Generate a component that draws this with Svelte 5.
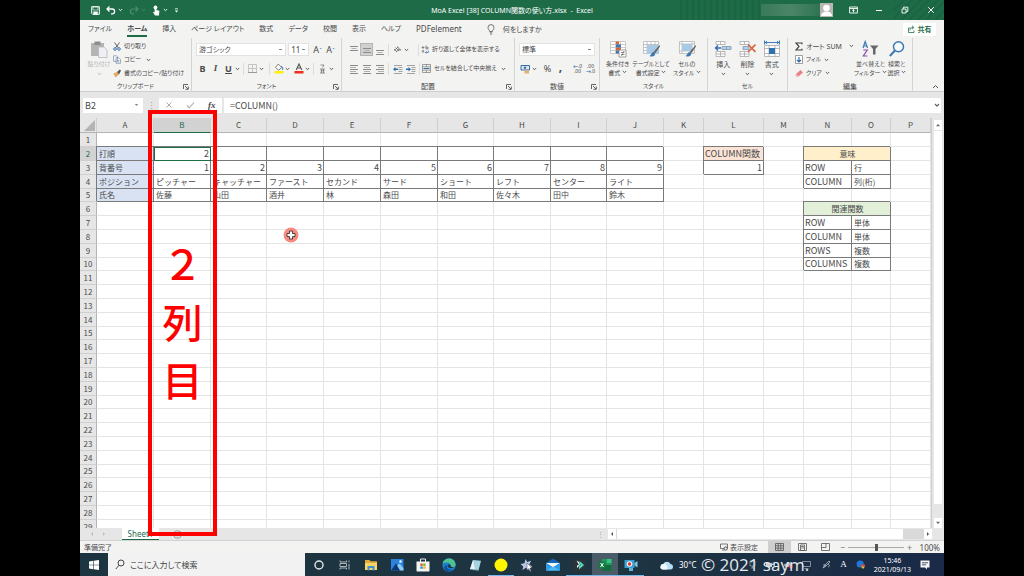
<script>
  const tabs = ['ファイル', 'ホーム', '挿入', 'ページ レイアウト', '数式', 'データ', '校閲', '表示', 'ヘルプ', 'PDFelement'];

  const cols = [
    ['A', 57], ['B', 57], ['C', 56], ['D', 57], ['E', 57], ['F', 57], ['G', 56], ['H', 57],
    ['I', 56], ['J', 57], ['K', 40], ['L', 60], ['M', 40], ['N', 48], ['O', 39], ['P', 40]
  ];

  // sheet content, one list per row starting at column A
  const cells = {
    2: ['打順', '2', '', '', '', '', '', '', '', ''],
    3: ['背番号', '1', '2', '3', '4', '5', '6', '7', '8', '9'],
    4: ['ポジション', 'ピッチャー', 'キャッチャー', 'ファースト', 'セカンド', 'サード', 'ショート', 'レフト', 'センター', 'ライト'],
    5: ['氏名', '佐藤', '山田', '酒井', '林', '森田', '和田', '佐々木', '田中', '鈴木']
  };

  const side = {
    L2: { text: 'COLUMN関数', cls: 'orange' },
    L3: { text: '1', cls: '' },
    N2: { text: '意味', cls: 'yellow', span: 2 },
    N3: { text: 'ROW' },
    O3: { text: '行' },
    N4: { text: 'COLUMN' },
    O4: { text: '列(桁)' },
    N6: { text: '関連関数', cls: 'green', span: 2 },
    N7: { text: 'ROW' },
    O7: { text: '単体' },
    N8: { text: 'COLUMN' },
    O8: { text: '単体' },
    N9: { text: 'ROWS' },
    O9: { text: '複数' },
    N10: { text: 'COLUMNS' },
    O10: { text: '複数' }
  };

  function getCell(row, i) {
    const name = cols[i][0];
    if (cells[row] && i < 10) {
      return { text: cells[row][i], cls: i === 0 ? 'blue' : '', boxed: true };
    }
    const s = side[name + row];
    if (s) return { ...s, boxed: true };
    return { text: '', cls: '' };
  }

  function isHidden(row, i) {
    return cols[i][0] === 'O' && (row === 2 || row === 6);
  }

  const rows = Array.from({ length: 29 }, (_, i) => i + 1);

  let formula = '=COLUMN()';
  let nameBox = 'B2';
  let zoom = 50;
  let search = '';
</script>

{#snippet chev()}
  <svg class="chev" width="5" height="4" viewBox="0 0 5 4"><path d="M.8 1l1.7 1.7L4.2 1" fill="none" stroke="currentColor" stroke-width=".9" /></svg>
{/snippet}

{#snippet launcher()}
  <button class="launcher" aria-label="詳細">
    <svg width="6" height="6" viewBox="0 0 6 6"><path d="M.5 5V.5H5M2 2l3 3M5.3 2.5v2.8H2.5" fill="none" stroke="#555" stroke-width=".9" /></svg>
  </button>
{/snippet}

{#snippet lines(a, b)}
  <svg width="10" height="10" viewBox="0 0 10 10"><path d={a} stroke="#8a8a8a" fill="none" /><path d={b} stroke="#b0b0b0" fill="none" /></svg>
{/snippet}

<div class="screen">
  <div class="window">
    <header class="titlebar">
      <div class="quick">
        <button aria-label="上書き保存"><svg width="9" height="9" viewBox="0 0 9 9"><path d="M.7.7h7.6v7.6H1.7l-1-1z" fill="none" stroke="#fff" /><path d="M2 1h5v3H2z" fill="none" stroke="#fff" stroke-width=".6" /><path d="M2.3 5.5h4.4v3H2.3z" fill="#fff" /></svg></button>
        <button aria-label="元に戻す"><svg width="10" height="9" viewBox="0 0 10 9"><path d="M3.5.5L1 3l2.500 2.500M1 3h5.200a2.400 2.400 0 010 4.800H5" fill="none" stroke="#fff" stroke-width="1.300" /></svg>{@render chev()}</button>
        <button class="dim" aria-label="やり直し"><svg width="10" height="9" viewBox="0 0 10 9"><path d="M6.500.5L9 3 6.500 5.500M9 3H3.800a2.400 2.400 0 000 4.800H5" fill="none" stroke="currentColor" stroke-width="1.200" /></svg>{@render chev()}</button>
        <button aria-label="タッチ"><svg width="9" height="11" viewBox="0 0 9 11"><circle cx="3.500" cy="2.400" r="1.900" fill="#fff" /><path d="M2.600 2h1.800v3l3 .8-.4 4.700H3L.8 7l1.800.3z" fill="#fff" /></svg>{@render chev()}</button>
        <button aria-label="カスタマイズ"><svg width="5" height="5" viewBox="0 0 5 5"><path d="M1 .8h3" stroke="#fff" stroke-width=".8" /><path d="M.8 2.500h3.400L2.500 4.500z" fill="#fff" /></svg></button>
      </div>
      <div class="title">MoA Excel [38] COLUMN関数の使い方.xlsx&nbsp; -&nbsp; Excel</div>
      <div class="account">
        <span class="username"></span>
        <svg class="avatar" width="13" height="14" viewBox="0 0 13 14"><rect width="13" height="14" fill="#b9b5b4" /><circle cx="6.500" cy="5" r="3.300" fill="#fff" /><path d="M1 13c0-3 2-4.500 5.500-4.500S12 10 12 13z" fill="#fff" /></svg>
        <button aria-label="リボンの表示オプション"><svg width="9" height="8" viewBox="0 0 9 8"><path d="M.6 1h7.800v6H.6zM.6 2.500h7.800M4.500 6.300V3.500M3.200 4.700l1.300-1.300 1.300 1.300" fill="none" stroke="#fff" stroke-width=".9" /></svg></button>
        <button aria-label="最小化"><svg width="8" height="8" viewBox="0 0 8 8"><path d="M1 4.500h6" stroke="#fff" /></svg></button>
        <button aria-label="元のサイズに戻す"><svg width="8" height="8" viewBox="0 0 8 8"><path d="M1 3h4v4H1zM2.500 2.800V1.200h4.300v4.300H5.200" fill="none" stroke="#fff" stroke-width=".9" /></svg></button>
        <button aria-label="閉じる"><svg width="8" height="8" viewBox="0 0 8 8"><path d="M1.200 1.200l5.600 5.600M6.800 1.200L1.200 6.800" stroke="#fff" /></svg></button>
      </div>
    </header>

    <nav class="tabs">
      {#each tabs as tab}
        <button class="tab" class:active={tab === 'ホーム'} class:roman={tab === 'PDFelement'}>{tab}</button>
      {/each}
      <button class="tell">
        <svg width="8" height="11" viewBox="0 0 8 11"><path d="M2.600 7.500C2.600 6 1 5.500 1 3.600a3 3 0 016 0C7 5.500 5.400 6 5.400 7.500zM2.800 8.800h2.400M3.200 10.200h1.600" fill="none" stroke="#555" stroke-width=".8" /></svg>
        何をしますか
      </button>
      <button class="share">
        <svg width="7" height="8" viewBox="0 0 7 8"><path d="M2.500 3H.5v4.500h5.500V5.500M2 5.500C2 3.500 3.500 2.500 5 2.500M4 .8l2 1.700-2 1.700" fill="none" stroke="#1e6b48" stroke-width=".8" /></svg>
        共有
      </button>
    </nav>

    <div class="ribbon">
      <section class="group">
        <div class="body clip">
          <button class="big faded">
            <svg width="18" height="18" viewBox="0 0 18 18"><path d="M1 3h13v13H1z" fill="#b4b4b4" /><path d="M4.500 1.500h6V5h-6z" fill="#8d8d8d" /><path d="M8.500 7h5.500l3 3v7.500H8.500z" fill="#f0f0f4" stroke="#b0b0b8" stroke-width=".7" /></svg>
            <span>貼り付け</span>{@render chev()}
          </button>
          <div class="stack">
            <button><svg width="8" height="9" viewBox="0 0 8 9"><path d="M1.500.5l4 5.500M6.500.5l-4 5.500" stroke="#555" stroke-width=".9" /><circle cx="2" cy="7" r="1.300" fill="none" stroke="#3c78b4" /><circle cx="6" cy="7" r="1.300" fill="none" stroke="#3c78b4" /></svg>切り取り</button>
            <button><svg width="8" height="9" viewBox="0 0 8 9"><path d="M.5.8h3l1 1v4.500h-4zM3 2.800h3l1.500 1.500v4H3z" fill="#f6f8fb" stroke="#7c8ea0" stroke-width=".7" /><path d="M4 5.500h2.500M4 7h2.500" stroke="#6c94c0" stroke-width=".6" /></svg>コピー&nbsp; {@render chev()}</button>
            <button><svg width="8" height="9" viewBox="0 0 8 9"><path d="M.3 4.500L4 3l2 2.500-3.500 3z" fill="#e8a860" /><path d="M4 3l2 2.500L8 1.500 6.800.5z" fill="#555" /></svg>書式のコピー/貼り付け</button>
          </div>
        </div>
        <div class="caption kana">クリップボード{@render launcher()}</div>
      </section>

      <section class="group">
        <div class="body rows">
          <div class="line">
            <select class="font" aria-label="フォント"><option>游ゴシック</option></select>
            <select class="size" aria-label="フォント サイズ"><option>11</option></select>
            <button class="tool grow" aria-label="フォント サイズの拡大">A<sup>ˆ</sup></button>
            <button class="tool" aria-label="フォント サイズの縮小">A<sup>ˇ</sup></button>
          </div>
          <div class="line">
            <button class="tool bold">B</button>
            <button class="tool italic">I</button>
            <button class="tool under">U</button>{@render chev()}
            <i class="sep"></i>
            <button class="tool" aria-label="罫線"><svg width="9" height="9" viewBox="0 0 9 9"><path d="M.5.5h8v8h-8zM4.500.5v8M.5 4.500h8" fill="none" stroke="#c4c4c4" /><path d="M0 8.500h9" stroke="#999" /></svg></button>{@render chev()}
            <i class="sep wider"></i>
            <button class="tool" aria-label="塗りつぶしの色"><svg width="10" height="11" viewBox="0 0 10 11"><path d="M4.300 1l3.500 3.500L4.500 7.300 1.500 4.300z" fill="#f8f8f8" stroke="#666" stroke-width=".8" /><path d="M7 3.500c2 0 2 2 1.600 3.500" fill="none" stroke="#3c78b4" /><path d="M.5 8h9v2.500h-9z" fill="#fcf304" /></svg></button>{@render chev()}
            <button class="tool grow" aria-label="フォントの色"><svg width="10" height="11" viewBox="0 0 10 11"><path d="M2.200 7L5 1l2.800 6M3.200 5h3.600" fill="none" stroke="#555" stroke-width="1.100" /><path d="M.5 8h9v2.500h-9z" fill="#f02a1d" /></svg></button>{@render chev()}
            <i class="sep"></i>
            <button class="tool" aria-label="ふりがな"><svg width="7" height="10" viewBox="0 0 7 10"><path d="M1.500 1h3.500L3.500 3.500M1 5h5M1.500 6.800h4M1 9h5M2.500 5v4M4.500 5v4" fill="none" stroke="#777" stroke-width=".8" /></svg></button>{@render chev()}
          </div>
        </div>
        <div class="caption kana">フォント{@render launcher()}</div>
      </section>

      <section class="group">
        <div class="body rows align">
          <div class="line">
            <button class="tool" aria-label="上揃え">{@render lines('M1 1.500h8M1 5.500h8', 'M2.500 3.500h5')}</button>
            <button class="tool on" aria-label="上下中央揃え">{@render lines('M1 3.500h8M1 7.500h8', 'M2.500 5.500h5')}</button>
            <button class="tool" aria-label="下揃え">{@render lines('M1 5.500h8M1 9.500h8', 'M2.500 7.500h5')}</button>
            <i class="sep close"></i>
            <button class="tool" aria-label="方向"><svg width="9" height="9" viewBox="0 0 9 9"><path d="M1 4l3 3M2.500 2.500l3.500 3.500M1.500 5.500L5 2M3 7l3.500-3M4.500 1.500L7 5.500 8 4" fill="none" stroke="#666" stroke-width=".8" /></svg></button>{@render chev()}
            <i class="sep far"></i>
            <button class="wide"><svg width="8" height="9" viewBox="0 0 8 9"><path d="M.5 2.500h3M2 1v3M5 .5v3.500M5 2.200h2v1.800H5M.8 6h2.500M2 5v3" fill="none" stroke="#666" stroke-width=".7" /><path d="M7.300 5.500v2H4.500M5.500 6.300L4.300 7.500l1.200 1.200" fill="none" stroke="#3c78b4" stroke-width=".8" /></svg>折り返して全体を表示する</button>
          </div>
          <div class="line">
            <button class="tool" aria-label="左揃え">{@render lines('M1 1.500h8M1 5.500h8M1 9.500h8', 'M1 3.500h6M1 7.500h6')}</button>
            <button class="tool" aria-label="中央揃え">{@render lines('M1 1.500h8M1 5.500h8M1 9.500h8', 'M2 3.500h6M2 7.500h6')}</button>
            <button class="tool" aria-label="右揃え">{@render lines('M1 1.500h8M1 5.500h8M1 9.500h8', 'M3 3.500h6M3 7.500h6')}</button>
            <i class="sep close"></i>
            <button class="tool" aria-label="インデントを減らす"><svg width="10" height="10" viewBox="0 0 10 10"><path d="M1 1.500h8M5.500 3.500h4M5.500 5.500h4M5.500 7.500h4M1 9.500h8" stroke="#999" stroke-width=".9" /><path d="M0 5.200L2.500 3v1.500H5v1.500H2.500v1.500z" fill="#2e6fae" /></svg></button>
            <button class="tool" aria-label="インデントを増やす"><svg width="10" height="10" viewBox="0 0 10 10"><path d="M1 1.500h8M5.500 3.500h4M5.500 5.500h4M5.500 7.500h4M1 9.500h8" stroke="#999" stroke-width=".9" /><path d="M5 5.200L2.500 3v1.500H0v1.500h2.500v1.500z" fill="#2e6fae" /></svg></button>
            <i class="sep close"></i>
            <button class="wide"><svg width="9" height="9" viewBox="0 0 9 9"><path d="M.5.5h8v8h-8zM.5 2.800h8M.5 6.200h8M4.500.5v2.300M4.500 6.200v2.300" fill="none" stroke="#777" stroke-width=".7" /><path d="M1.500 4.500h6" stroke="#2e6fae" /></svg>セルを結合して中央揃え&nbsp; {@render chev()}</button>
          </div>
        </div>
        <div class="caption">配置{@render launcher()}</div>
      </section>

      <section class="group">
        <div class="body rows">
          <div class="line">
            <select class="format" aria-label="表示形式"><option>標準</option></select>
          </div>
          <div class="line">
            <button class="tool" aria-label="通貨"><svg width="11" height="10" viewBox="0 0 11 10"><path d="M1 1.500h8.500v4.500H1z" fill="#dce8f4" stroke="#3c6ea4" /><circle cx="5" cy="3.700" r="1.200" fill="#3c6ea4" /><path d="M4.500 6.500h4.500v3H4.500z" fill="#e8b070" /></svg></button>{@render chev()}
            <button class="tool pct">%</button>
            <button class="tool comma">,</button>
            <i class="sep close"></i>
            <button class="tool dec" aria-label="小数点以下の表示桁数を増やす"><span><b>←</b>.0</span><span>.00</span></button>
            <button class="tool dec" aria-label="小数点以下の表示桁数を減らす"><span>.00</span><span><b>→</b>.0</span></button>
          </div>
        </div>
        <div class="caption">数値{@render launcher()}</div>
      </section>

      <section class="group">
        <div class="body bigs styles">
          <button class="big">
            <svg width="18" height="18" viewBox="0 0 18 18"><path d="M1.500 1.500h15v12h-15zM1.500 4.500h15M1.500 7.500h15M1.500 10.500h15M6.500 1.500v12M11.500 1.500v12" fill="#fff" stroke="#bdbdbd" stroke-width=".8" /><path d="M7 1.500h3v3H7zM7 7.500h5v3H7z" fill="#d9623b" /><path d="M7 4.500h5v3H7zM7 10.500h3v3H7z" fill="#3c78b4" /><path d="M10 10h7v7h-7z" fill="#fff" stroke="#888" stroke-width=".8" /><path d="M12 12.500h3.500M12 14.500h3.500M15 11l-2.500 5" stroke="#666" stroke-width=".7" /></svg>
            <span>条件付き</span><span>書式 {@render chev()}</span>
          </button>
          <button class="big">
            <svg width="18" height="18" viewBox="0 0 18 18"><path d="M1.500 1.500h15v12h-15zM1.500 4.500h15M5 1.500v12M9 1.500v12M13 1.500v12M1.500 7.500h15M1.500 10.500h15" fill="#fff" stroke="#b5b5b5" stroke-width=".8" /><path d="M5 5h11.500v9H5z" fill="#a9cae6" /><path d="M17.500 5l-6 7 1.500 1.500 5-7z" fill="#666" /><path d="M11.500 12c-2 0-2 3-4 4 3 1.500 6 0 5.500-2.500z" fill="#3c78b4" /></svg>
            <span>テーブルとして</span><span>書式設定 {@render chev()}</span>
          </button>
          <button class="big">
            <svg width="18" height="18" viewBox="0 0 18 18"><path d="M1.500 1.500h15v12h-15zM1.500 4h15M1.500 11h15M4 1.500v12M14 1.500v12" fill="#fff" stroke="#b5b5b5" stroke-width=".8" /><path d="M4 4h10v7H4z" fill="#a9cae6" /><path d="M17.500 5l-6 7 1.500 1.500 5-7z" fill="#666" /><path d="M11.500 12c-2 0-2 3-4 4 3 1.500 6 0 5.500-2.500z" fill="#3c78b4" /></svg>
            <span>セルの</span><span>スタイル {@render chev()}</span>
          </button>
        </div>
        <div class="caption kana">スタイル</div>
      </section>

      <section class="group">
        <div class="body bigs cellops">
          <button class="big">
            <svg width="18" height="18" viewBox="0 0 18 18"><path d="M2 1.500h9v3H2zM6.500 1.500v3M2 11.500h9v5H2zM6.500 11.500v5M2 14h9" fill="#fff" stroke="#a8a8a8" stroke-width=".8" /><path d="M8 6.500h9v3H8zM12.500 6.500v3" fill="#b4d0ea" stroke="#7f97ad" stroke-width=".8" /><path d="M7 8H1.500M4 5.500L1.500 8 4 10.500" fill="none" stroke="#2e6fae" stroke-width="1.300" /></svg>
            <span>挿入</span>{@render chev()}
          </button>
          <button class="big">
            <svg width="18" height="18" viewBox="0 0 18 18"><path d="M2 1.500h9v3H2zM6.500 1.500v3M2 11.500h9v5H2zM6.500 11.500v5M2 14h9" fill="#fff" stroke="#a8a8a8" stroke-width=".8" /><path d="M5 6.500h6v3H5z" fill="#b4d0ea" stroke="#7f97ad" stroke-width=".8" /><path d="M10 4.500l7.500 7.500M17.500 4.500L10 12" stroke="#d9623b" stroke-width="1.700" /></svg>
            <span>削除</span>{@render chev()}
          </button>
          <button class="big">
            <svg width="18" height="18" viewBox="0 0 18 18"><path d="M1.500 5.500h15v11h-15zM1.500 8.500h15M1.500 13.500h15M6 5.500v11M12 5.500v11" fill="#fff" stroke="#a8a8a8" stroke-width=".8" /><path d="M6 8h6v6H6z" fill="#2e6fae" /><path d="M2 2.500h14M4 1L2.300 2.500 4 4M14 1l1.700 1.500L14 4M1.500.5v4M16.500.5v4" fill="none" stroke="#2e6fae" stroke-width=".9" /></svg>
            <span>書式</span>{@render chev()}
          </button>
        </div>
        <div class="caption kana">セル</div>
      </section>

      <section class="group">
        <div class="body edit">
          <div class="stack">
            <button class="sum"><svg width="8" height="9" viewBox="0 0 8 9"><path d="M7 2.200V1H1l3 3.500L1 8h6V6.800" fill="none" stroke="#444" stroke-width="1.200" /></svg>オート SUM &nbsp;{@render chev()}</button>
            <button><svg width="8" height="9" viewBox="0 0 8 9"><path d="M.5.5h7v8h-7z" fill="#fff" stroke="#888" stroke-width=".8" /><path d="M4 2v5M2 5l2 2 2-2" fill="none" stroke="#2e6fae" stroke-width="1.200" /></svg>フィル {@render chev()}</button>
            <button><svg width="8" height="9" viewBox="0 0 8 9"><path d="M5.500 1L8 3.500l-4.500 4L1 5z" fill="#e8808a" /><path d="M1 5l2.500 2.500-1.500.8L.2 6.300z" fill="#f3b2b8" /></svg>クリア {@render chev()}</button>
          </div>
          <button class="big">
            <svg width="18" height="18" viewBox="0 0 18 18"><path d="M2 8l2.200-6.500L6.500 8M2.800 6h3" fill="none" stroke="#3c78b4" stroke-width="1.200" /><path d="M2.300 10h4L2.300 16h4.200" fill="none" stroke="#8b4fa8" stroke-width="1.200" /><path d="M9 5.500h8.500l-3 3.500v5.500h-2.500V9z" fill="#666" /></svg>
            <span>並べ替えと</span><span>フィルター {@render chev()}</span>
          </button>
          <button class="big">
            <svg width="18" height="18" viewBox="0 0 18 18"><circle cx="10.500" cy="6.800" r="5" fill="#f5fafd" stroke="#3c78b4" stroke-width="1.500" /><path d="M7 10.500L1.800 16" stroke="#3c78b4" stroke-width="2" /></svg>
            <span>検索と</span><span>選択 {@render chev()}</span>
          </button>
        </div>
        <div class="caption">編集</div>
      </section>
      <button class="collapse" aria-label="リボンを折りたたむ"><svg width="7" height="5" viewBox="0 0 7 5"><path d="M1 4l2.500-2.500L6 4" fill="none" stroke="#555" /></svg></button>
    </div>

    <div class="formulabar">
      <div class="namebox">
        <input aria-label="名前ボックス" bind:value={nameBox} />
        <svg width="5" height="4" viewBox="0 0 5 4"><path d="M.8 1h3.400L2.500 3z" fill="#888" /></svg>
      </div>
      <span class="grip">⋮</span>
      <div class="fx">
        <button aria-label="キャンセル"><svg width="8" height="8" viewBox="0 0 8 8"><path d="M1.500 1.500l5 5M6.500 1.500l-5 5" stroke="#aaa" /></svg></button>
        <button aria-label="入力"><svg width="9" height="8" viewBox="0 0 9 8"><path d="M1 4.500l2.300 2.300L8 1.500" fill="none" stroke="#aaa" stroke-width="1.100" /></svg></button>
        <button class="fn">fx</button>
      </div>
      <div class="formula">
        <input aria-label="数式バー" bind:value={formula} />
        <svg width="6" height="5" viewBox="0 0 6 5"><path d="M1 1l2 2.200L5 1" fill="none" stroke="#666" stroke-width="1.200" /></svg>
      </div>
    </div>

    <main class="sheet">
      <div class="grid">
        <table>
          <colgroup>
            <col style="width: 17px" />
            {#each cols as [name, width]}
              <col style="width: {width}px" />
            {/each}
            <col />
          </colgroup>
          <thead>
            <tr>
              <th class="corner" aria-label="すべて選択"><svg width="11" height="11" viewBox="0 0 11 11"><path d="M11 0v11H0z" fill="#b4b4b4" /></svg></th>
              {#each cols as [name]}
                <th class:selected={name === 'B'}>{name}</th>
              {/each}
              <th></th>
            </tr>
          </thead>
          <tbody>
            {#each rows as row}
              <tr>
                <th class:selected={row === 2}>{row}</th>
                {#each cols as [name], i}
                  {#if !isHidden(row, i)}
                    {@const cell = getCell(row, i)}
                    <td
                      colspan={cell.span || 1}
                      class={cell.cls}
                      class:boxed={cell.boxed}
                      class:soft={row === 2 && i < 10}
                      class:number={/^\d+$/.test(cell.text)}
                      class:latin={/^[A-Z]/.test(cell.text)}
                      class:current={row === 2 && name === 'B'}>{cell.text}</td>
                  {/if}
                {/each}
                <td></td>
              </tr>
            {/each}
          </tbody>
        </table>
      </div>
      <div class="vscroll">
        <button aria-label="上へ"><svg width="6" height="4" viewBox="0 0 6 4"><path d="M1 3.200h4L3 1z" fill="#666" /></svg></button>
        <span class="thumb"></span>
        <button aria-label="下へ"><svg width="6" height="4" viewBox="0 0 6 4"><path d="M1 .8h4L3 3z" fill="#666" /></svg></button>
      </div>
    </main>

    <div class="sheettabs">
      <span class="arrows">
        <svg width="4" height="6" viewBox="0 0 4 6"><path d="M3 1v4L1 3z" fill="#bbb" /></svg>
        <svg width="4" height="6" viewBox="0 0 4 6"><path d="M1 1v4l2-2z" fill="#bbb" /></svg>
      </span>
      <button class="sheettab">Sheet1</button>
      <button class="add" aria-label="新しいシート"><svg width="9" height="9" viewBox="0 0 9 9"><circle cx="4.500" cy="4.500" r="3.800" fill="none" stroke="#888" stroke-width=".8" /><path d="M2.500 4.500h4M4.500 2.500v4" stroke="#888" stroke-width=".8" /></svg></button>
      <span class="grip">⋮</span>
      <div class="hscroll">
        <button aria-label="左へ"><svg width="4" height="6" viewBox="0 0 4 6"><path d="M3 1v4L1 3z" fill="#555" /></svg></button>
        <span class="thumb"></span>
        <button aria-label="右へ"><svg width="4" height="6" viewBox="0 0 4 6"><path d="M1 1v4l2-2z" fill="#555" /></svg></button>
      </div>
    </div>

    <footer class="status">
      <span class="ready">準備完了</span>
      <button class="display"><svg width="8" height="8" viewBox="0 0 8 8"><path d="M.5 1h7v4.500h-7zM2 7h2.500" fill="none" stroke="#555" stroke-width=".8" /><circle cx="5.700" cy="5.500" r="1.600" fill="#f3f3f2" stroke="#555" /></svg>表示設定</button>
      <button class="view on" aria-label="標準"><svg width="9" height="8" viewBox="0 0 9 8"><path d="M.5.5h8v7h-8zM.5 2.800h8M.5 5.200h8M3.200.5v7M5.800.5v7" fill="none" stroke="#555" stroke-width=".8" /></svg></button>
      <button class="view" aria-label="ページ レイアウト"><svg width="9" height="8" viewBox="0 0 9 8"><path d="M.5.5h8v7h-8zM2.500 2h4v5.500h-4zM3.200 3.500h2.600M3.200 5h2.600" fill="none" stroke="#555" stroke-width=".8" /></svg></button>
      <button class="view" aria-label="改ページ プレビュー"><svg width="9" height="8" viewBox="0 0 9 8"><path d="M.5.5h8v7h-8zM.5 4.500h4.500v-4" fill="none" stroke="#555" stroke-width=".8" /></svg></button>
      <button class="step" aria-label="縮小">−</button>
      <input type="range" min="0" max="100" bind:value={zoom} aria-label="ズーム" />
      <button class="step" aria-label="拡大">+</button>
      <span class="percent">100%</span>
    </footer>

    <div class="taskbar">
      <button class="start" aria-label="スタート"><svg width="10" height="10" viewBox="0 0 10 10"><path d="M0 1.400L4.300.8v3.900H0zM4.900.7L10 0v4.700H4.900zM0 5.300h4.300v3.900L0 8.600zM4.900 5.300H10V10l-5.100-.7z" fill="#fff" /></svg></button>
      <label class="search">
        <svg width="10" height="11" viewBox="0 0 10 11"><circle cx="6" cy="4" r="3" fill="none" stroke="#444" /><path d="M4 6.300L.8 10" stroke="#444" /></svg>
        <input type="text" placeholder="ここに入力して検索" bind:value={search} aria-label="検索" />
      </label>
      <div class="apps">
        <button aria-label="Cortana"><svg width="14" height="14" viewBox="0 0 14 14"><circle cx="7" cy="7" r="4" fill="none" stroke="#e4e8ea" stroke-width="1.400" /></svg></button>
        <button aria-label="タスク ビュー"><svg width="14" height="14" viewBox="0 0 14 14"><path d="M2 2.500v1.500h6.500V2.500M2 11.500V10h6.500v1.500M2 5.500h6.500v3H2zM11 2.500v2M11 6v5.500" fill="none" stroke="#b8c0c4" stroke-width=".9" /></svg></button>
        <button aria-label="エクスプローラー"><svg width="14" height="14" viewBox="0 0 14 14"><path d="M1 2h4.500l1 1.300H13V12H1z" fill="#e3a93c" /><path d="M1 5h12v7H1z" fill="#fbd468" /><path d="M3.500 8h7v4.500h-2V10h-3v2.500h-2z" fill="#3f8fd0" /></svg></button>
        <button aria-label="フォト"><svg width="14" height="14" viewBox="0 0 14 14"><path d="M1 1h12.500v11.500H1z" fill="#2a83dc" /><path d="M1 12.500l5-7 6 7z" fill="#0b3a70" /><path d="M7 7.500l2.500-2 4 4.500v2.500H10z" fill="#8cc8f5" /><circle cx="10.500" cy="3.500" r="1.200" fill="#fff" /></svg></button>
        <button aria-label="Microsoft Store"><svg width="14" height="14" viewBox="0 0 14 14"><path d="M4.500 4V1h5v3" fill="none" stroke="#eee" /><path d="M.5 3.500h13v9c0 .6-.4 1-1 1h-11c-.6 0-1-.4-1-1z" fill="#f4f4f4" /><path d="M4.300 5.500h2.400v2.400H4.300z" fill="#e8502a" /><path d="M7.200 5.500h2.400v2.400H7.200z" fill="#7ab81e" /><path d="M4.300 8.400h2.400v2.400H4.300z" fill="#1f9be8" /><path d="M7.200 8.400h2.400v2.400H7.200z" fill="#f8b414" /></svg></button>
        <button aria-label="Edge"><svg width="14" height="14" viewBox="0 0 14 14"><circle cx="7" cy="7" r="6.700" fill="#1c80cf" /><path d="M.5 5.500C2-1 12-1.500 13.600 6c.3 2.500-2 3.500-4.600 3C10 5 5 3 .5 5.500z" fill="#4dc490" /><path d="M5 7c-1 3 2 6 6.500 4.500C9 14 5 14 3 12 1.500 10 2.500 7 5 7z" fill="#10509c" /><path d="M5.500 7.500C6 6 8.500 6 8.500 8c.3 1 2 1.500 3.500 1-1.500 2-6 1.500-6.500-1.500z" fill="#1e3541" /></svg></button>
        <button aria-label="メモ帳"><svg width="14" height="14" viewBox="0 0 14 14"><path d="M5 2l8 .8-2.500 9.700-8.500-1.200z" fill="#a6d3e0" /><path d="M5 2L2 11.300l5 .7z" fill="#e8f3f5" /><path d="M2 11.300l8.500 1.200.3-1" fill="none" stroke="#58808c" stroke-width=".8" /></svg></button>
        <button class="running" aria-label="付箋"><svg width="14" height="14" viewBox="0 0 14 14"><circle cx="7" cy="7" r="6.500" fill="#fff600" /></svg></button>
        <button aria-label="スター"><svg width="14" height="14" viewBox="0 0 14 14"><path d="M5.500 1l1.700 3 4-1.300-2 3.700 3.300 2-3.600.8L8.500 12 6 9.700 2.500 12l.7-3.600L.5 6l4-.8z" fill="#b8c4ea" /><path d="M7 5l5 5-2.200.2 1.200 2.800-1 .4-1.200-2.600L7 12z" fill="#fff" stroke="#445" stroke-width=".5" /></svg></button>
        <button aria-label="メール"><svg width="14" height="14" viewBox="0 0 14 14"><path d="M0 5l7-4.500L14 5v7.500H0z" fill="#1566b8" /><path d="M0 5h14L7 9.500z" fill="#f4f8fb" /><path d="M0 5l7 4.500L14 5v7.500H0z" fill="#2b9bea" /><path d="M0 12.500L7 8.500l7 4z" fill="#50b8f5" /></svg></button>
        <button class="running" aria-label="Filmora"><svg width="14" height="14" viewBox="0 0 14 14"><path d="M1 1h12v12H1z" fill="#2a333a" /><path d="M4.500 2.500L7 4l1 3-3 3V7.500L7 7z" fill="#e8fffb" /><path d="M7.500 3L12 7l-5 4.500V8.500L9 7 7.500 5.500z" fill="#50dcc4" /></svg></button>
        <button class="running active" aria-label="Excel"><svg width="14" height="14" viewBox="0 0 14 14"><path d="M4 1h9.500v12H4z" fill="#1f9a5c" /><path d="M9 1h4.500v4H9z" fill="#35c481" /><path d="M4 7h9.500v6H4z" fill="#156b40" /><path d="M.5 3.500h7v7h-7z" fill="#107c41" /><path d="M2.500 5l3 4M5.500 5l-3 4" stroke="#fff" /></svg></button>
        <button class="running" aria-label="録画"><svg width="14" height="14" viewBox="0 0 14 14"><path d="M.5 2h10v8h-10z" fill="#3a9fd4" /><path d="M10.500 5l3-2v6.500l-3-2z" fill="#7fc4e6" /><circle cx="5.500" cy="6" r="2.800" fill="#f4f4f4" /><circle cx="5.500" cy="6" r="1.700" fill="#e03028" /><path d="M5 10h4v3H5z" fill="#5fb4de" /></svg></button>
      </div>
      <div class="tray">
        <svg width="14" height="10" viewBox="0 0 14 10"><path d="M3 9.500a2.700 2.700 0 01.3-5.400A4 4 0 0110.500 4a2.800 2.800 0 01.5 5.500z" fill="#b8def5" /><path d="M3 9.500a2.700 2.700 0 01.3-5.400C5 3 8 5 7.500 9.500z" fill="#f0f8fd" /></svg>
        <span class="temp">30°C</span>
        <span class="mini">
          <svg width="9" height="9" viewBox="0 0 9 9"><path d="M2 1h5v5H2zM3 8h3M4.500 6v2" fill="none" stroke="#8d99a8" stroke-width=".8" /></svg>
          <svg width="9" height="9" viewBox="0 0 9 9"><path d="M0 3h6v4H0zM6 4l3-1v3l-3-1z" fill="#c8d0d8" /></svg>
          <svg width="9" height="9" viewBox="0 0 9 9"><path d="M0 5.500a2 2 0 012-2 2.500 2.500 0 014.500 0A2 2 0 017 7H1.500z" fill="#a8b4c0" /><circle cx="7" cy="6.500" r="1.900" fill="#e03830" /></svg>
          <svg width="9" height="9" viewBox="0 0 9 9"><path d="M.5 1.500h8v5h-8zM2.500 8.500h4" fill="none" stroke="#98a4b4" stroke-width=".8" /></svg>
        </span>
        <span class="tail">
          <svg width="9" height="9" viewBox="0 0 9 9"><path d="M1 8l2-3 4-4 1 1-4 4zM1 5.500c2-2 3 0 1.500 1.500M6 4.500c2 0 2 2 0 2.500" fill="none" stroke="#ccd4dc" stroke-width=".7" /></svg>
          <span class="ime">A</span>
          <svg width="9" height="9" viewBox="0 0 9 9"><circle cx="4.200" cy="4" r="3.600" fill="#1f78d8" /><path d="M5 4.500h4v2H5z" fill="#e8433a" /><path d="M5 6.500h4L7 9z" fill="#f3c12e" /></svg>
          <span class="clock"><span>15:46</span><span>2021/09/13</span></span>
          <svg width="10" height="10" viewBox="0 0 10 10"><path d="M.5.5h9v7H7v2L5 7.500H.5z" fill="#f2f4f6" /><path d="M2 2.800h6M2 4.800h4" stroke="#223048" stroke-width=".8" /></svg>
        </span>
      </div>
    </div>

    <!-- video overlays on top of the window -->
    <div class="marker"><span>２</span><span>列</span><span>目</span></div>
    <svg class="pointer" width="16" height="16" viewBox="0 0 16 16"><circle cx="8" cy="8" r="7.500" fill="#f98a80" /><path d="M6.500 4h3v2.500H12v3H9.500V12h-3V9.500H4v-3h2.500z" fill="#fff" stroke="#444" /></svg>
    <div class="watermark">© 2021 saym.</div>
  </div>
</div>

<style>
  :global(body) {
    background: #000;
  }

  .screen {
    height: 100vh;
    padding: 0 80px;
    box-sizing: border-box;
    overflow: hidden;
    font-family: 'Noto Sans', 'Noto Sans CJK JP', sans-serif;
    font-size: 7px;
    line-height: 9px;
    font-feature-settings: 'palt';
    color: #4a4a4a;
  }

  .window {
    position: relative;
    display: flex;
    flex-direction: column;
    height: 100%;
    background: #e6e6e6;
  }

  button, input, select {
    font: inherit;
    font-feature-settings: inherit;
    color: inherit;
    border: 0;
    padding: 0;
    margin: 0;
    background: none;
    border-radius: 0;
    min-width: 0;
  }

  button {
    display: flex;
    align-items: center;
    justify-content: center;
    white-space: nowrap;
  }

  svg {
    flex: none;
    display: block;
  }

  .chev {
    display: inline-block;
    vertical-align: middle;
  }

  /* title bar */
  .titlebar {
    display: grid;
    grid-template-columns: 1fr auto 1fr;
    align-items: center;
    height: 20px;
    background:
      repeating-linear-gradient(90deg, #1b6443 0 2px, transparent 2px 6px) no-repeat right 184px top / 80px 20px,
      repeating-linear-gradient(135deg, #1b6443 0 2px, transparent 2px 6px) no-repeat right top / 50px 20px,
      #1e6b48;
    color: #fff;
  }

  .quick {
    display: flex;
    align-items: center;
    gap: 6px;
    padding-left: 11px;
  }

  .quick button {
    gap: 2px;
  }

  .quick .dim {
    color: #4b8d6e;
  }

  .account {
    display: flex;
    align-items: center;
    justify-content: flex-end;
  }

  .username {
    width: 59px;
    height: 12px;
    background: linear-gradient(90deg, #39795a, #4b8567, #2f7553);
  }

  .avatar {
    margin-right: 7px;
  }

  .account button {
    width: 26px;
    height: 20px;
  }

  /* ribbon */
  .tabs {
    display: flex;
    align-items: center;
    gap: 15px;
    height: 18px;
    padding: 0 8px;
    background: #f3f3f2;
  }

  .tab {
    height: 15px;
    border-bottom: 2px solid transparent;
  }

  .tab.active {
    border-color: #1e6b48;
    font-weight: 700;
  }

  .roman {
    font-size: 8px;
  }

  .tell {
    gap: 8px;
    margin-left: 10px;
  }

  .share {
    gap: 3px;
    margin-left: auto;
    width: 33px;
    height: 13px;
    background: #fff;
    color: #1e6b48;
    font-weight: 700;
  }

  .ribbon {
    display: grid;
    grid-template-columns: 112fr 150fr 173fr 85fr 108fr 80fr 125fr 31fr;
    height: 54px;
    box-sizing: border-box;
    background: #f3f3f2;
    border-bottom: 1px solid #cfcfcf;
  }

  .group {
    display: flex;
    flex-direction: column;
    min-width: 0;
    border-right: 1px solid #d4d4d4;
  }

  .body {
    display: flex;
    flex: 1;
    box-sizing: border-box;
    padding: 1px 3px 0;
  }

  .clip {
    padding-left: 5px;
  }

  .caption {
    display: flex;
    position: relative;
    justify-content: center;
    align-items: center;
    height: 9px;
  }

  .kana, .big, .stack, .wide {
    font-size: 6px;
  }

  .launcher {
    position: absolute;
    right: 2px;
    top: 2px;
  }

  .big {
    flex-direction: column;
    justify-content: flex-start;
    padding-top: 1px;
  }

  .big svg:first-child {
    margin-bottom: 2px;
  }

  .big > .chev {
    margin-top: 3px;
  }

  .cellops .big, .sum {
    font-size: 7px;
  }

  .faded {
    width: 28px;
    flex: none;
    color: #b5b5b5;
  }

  .stack {
    display: flex;
    flex-direction: column;
    align-items: flex-start;
    justify-content: space-between;
    padding: 1px 0 3px;
  }

  .stack button {
    gap: 3px;
    height: 12px;
  }

  .rows {
    flex-direction: column;
    gap: 6px;
    padding: 5px 4px 0;
  }

  .line {
    display: flex;
    align-items: center;
    height: 13px;
  }

  .tool {
    width: 13px;
    height: 13px;
    flex: none;
    font-size: 9px;
  }

  .tool sup {
    font-size: 6px;
    line-height: 6px;
    color: #2e6fae;
  }

  .tool.on {
    background: #d0d0d0;
    outline: 1px solid #b4b4b4;
    outline-offset: -1px;
  }

  .grow {
    margin-left: 2px;
  }

  .bold {
    font-weight: 700;
  }

  .italic {
    font-style: italic;
    font-family: 'Liberation Serif', serif;
    font-weight: 700;
  }

  .under {
    text-decoration: underline;
    font-weight: 700;
  }

  .sep {
    width: 1px;
    height: 12px;
    margin: 0 2px 0 3px;
    background: #dcdcdc;
  }

  .sep.far {
    margin-left: 9px;
  }

  .sep.wider {
    margin-left: 5px;
  }

  .sep.close {
    margin: 0 2px;
  }

  select {
    appearance: none;
    height: 13px;
    padding-left: 2px;
    background: #fff linear-gradient(#888, #888) no-repeat right 3px center / 3px 1px;
    border: 1px solid #e2e2e2;
  }

  .font {
    width: 91px;
    margin-right: 2px;
  }

  .size {
    width: 21px;
    font-size: 8px;
  }

  .format {
    width: 76px;
  }

  .align {
    padding-left: 5px;
  }

  .wide {
    gap: 3px;
  }

  .pct {
    margin-left: 4px;
  }

  .comma {
    font-weight: 700;
    font-size: 12px;
    padding-bottom: 5px;
  }

  .dec {
    flex-direction: column;
    font-size: 5px;
    line-height: 5px;
  }

  .dec b {
    color: #2e6fae;
  }

  .bigs {
    justify-content: space-around;
  }

  .styles {
    justify-content: space-between;
    padding: 1px 6px 0;
  }

  .edit {
    justify-content: space-between;
    padding: 1px 6px 0 7px;
  }

  .collapse {
    align-self: end;
    justify-self: end;
    padding: 0 5px 2px 0;
  }

  /* formula bar */
  .formulabar {
    display: flex;
    align-items: center;
    height: 26px;
    padding: 0 3px;
    box-sizing: border-box;
    font-family: 'Noto Sans CJK JP', sans-serif;
    font-size: 9px;
    font-feature-settings: normal;
  }

  .namebox, .formula, .fx {
    display: flex;
    align-items: center;
    height: 15px;
    background: #fff;
  }

  .namebox {
    width: 54px;
    padding: 0 4px 0 2px;
  }

  .namebox input, .formula input {
    flex: 1;
  }

  .grip {
    width: 16px;
    text-align: center;
    color: #999;
  }

  .fx {
    width: 63px;
    justify-content: space-around;
  }

  .fn {
    font-family: 'Liberation Serif', serif;
    font-style: italic;
    font-weight: 700;
  }

  .formula {
    flex: 1;
    margin-left: 2px;
    padding: 0 1px 0 6px;
  }

  /* sheet */
  .sheet {
    display: flex;
    flex: 1;
    min-height: 0;
  }

  .grid {
    flex: 1;
    min-width: 0;
    overflow: hidden;
    background: #fff;
    font-family: 'Noto Sans CJK JP', sans-serif;
    font-size: 8px;
    font-feature-settings: normal;
  }

  table {
    width: 100%;
    table-layout: fixed;
    border-collapse: separate;
    border-spacing: 0;
  }

  th, td {
    box-sizing: border-box;
    padding: 0;
    height: 14px;
    line-height: 12px;
    font-weight: 400;
    white-space: nowrap;
    border-right: 1px solid #e4e4e4;
    border-bottom: 1px solid #e4e4e4;
  }

  tbody tr:nth-child(5n) > * {
    height: 13px;
  }

  td {
    padding: 0 1px 0 2px;
  }

  th {
    background: #e6e6e6;
    border-color: #cfcfcf;
    font-size: 8px;
    text-align: center;
  }

  thead th {
    height: 15px;
    border-bottom-color: #b4b4b4;
  }

  tbody th {
    border-right-color: #b4b4b4;
  }

  th.selected {
    background: #d2d2d2;
    color: #1e6b48;
    border-bottom-color: #1e6b48;
  }

  tbody th.selected {
    border-bottom-color: #cfcfcf;
    border-right-color: #1e6b48;
  }

  .corner svg {
    margin: 0 1px 0 auto;
  }

  .boxed {
    border-color: #7a7a7a;
    box-shadow: -1px -1px 0 #7a7a7a;
  }

  .soft {
    border-bottom-color: #b9b9b9;
  }

  .number {
    text-align: right;
    font-size: 9px;
  }

  .latin {
    font-size: 9px;
    padding: 0 0 0 1px;
  }

  .blue {
    background: #d9e2f3;
  }

  .orange {
    background: #fbe4d5;
  }

  .yellow {
    background: #fff0cb;
    text-align: center;
  }

  .green {
    background: #e2efd9;
    text-align: center;
  }

  .current {
    outline: 1px solid #1e6b48;
    outline-offset: -1px;
  }

  .vscroll {
    display: flex;
    flex-direction: column;
    gap: 1px;
    width: 8px;
    padding: 2px 2px 0 2px;
    border-left: 1px solid #cfcfcf;
  }

  .vscroll button {
    height: 10px;
    background: #fff;
  }

  .thumb {
    flex: 1;
    background: #fff;
  }

  .vscroll .thumb {
    margin-bottom: 13px;
  }

  .sheettabs {
    display: flex;
    align-items: center;
    height: 13px;
    padding-right: 12px;
    border-bottom: 1px solid #d2d2d2;
    box-sizing: border-box;
  }

  .arrows {
    display: flex;
    gap: 8px;
    width: 32px;
    padding-left: 10px;
  }

  .sheettab {
    width: 37px;
    height: 12px;
    background: #fff;
    border-bottom: 1px solid #1e6b48;
    color: #1e6b48;
    font-size: 8px;
  }

  .add {
    margin: 0 auto 0 14px;
  }

  .hscroll {
    display: flex;
    width: 38%;
    height: 10px;
    gap: 1px;
    background: #d9d9d9;
  }

  .hscroll button {
    width: 8px;
    background: #fff;
  }

  .hscroll .thumb {
    margin-right: 20px;
  }

  .status {
    display: flex;
    align-items: center;
    height: 12px;
    padding: 0 4px;
    background: #f3f3f2;
  }

  .ready {
    margin-right: auto;
  }

  .display {
    gap: 2px;
    margin-right: 10px;
  }

  .view {
    width: 23px;
    height: 12px;
  }

  .view.on {
    background: #cfcfcf;
  }

  .step {
    width: 11px;
    font-size: 9px;
    color: #777;
  }

  input[type='range'] {
    appearance: none;
    width: 56px;
    height: 7px;
    background: linear-gradient(#a8a8a8, #a8a8a8) no-repeat center / 100% 1px;
  }

  input[type='range']::-webkit-slider-thumb {
    appearance: none;
    width: 3px;
    height: 7px;
    background: #555;
  }

  .percent {
    width: 25px;
    text-align: right;
    font-size: 8px;
  }

  /* taskbar */
  .taskbar {
    display: flex;
    align-items: stretch;
    height: 23px;
    background: linear-gradient(90deg, #1d3540 0%, #1e3541 60%, #1a2a48 100%);
    color: #fff;
  }

  .start {
    width: 28px;
  }

  .search {
    display: flex;
    align-items: center;
    gap: 5px;
    width: 197px;
    padding-left: 7px;
    box-sizing: border-box;
    background: #f2f2f2;
    color: #444;
    font-size: 8px;
  }

  .search input {
    flex: 1;
  }

  .search input::placeholder {
    color: #444;
  }

  .apps {
    display: flex;
    padding-left: 1px;
  }

  .apps button {
    width: 26px;
    border-top: 1px solid transparent;
    border-bottom: 1px solid transparent;
  }

  .apps .running {
    border-bottom-color: #76b9ed;
  }

  .apps .active {
    background: #4a5c68;
  }

  .tray {
    display: flex;
    flex: 1;
    align-items: center;
    padding: 0 14px 0 16px;
    gap: 5px;
  }

  .temp {
    font-size: 8px;
  }

  .mini {
    display: flex;
    gap: 9px;
    margin-left: 46px;
  }

  .tail {
    display: flex;
    align-items: center;
    gap: 9px;
    margin-left: auto;
  }

  .ime {
    font-family: 'Liberation Serif', serif;
    font-size: 9px;
  }

  .clock {
    display: flex;
    flex-direction: column;
    align-items: center;
  }

  /* overlays */
  .marker {
    position: absolute;
    left: 68px;
    top: 110px;
    display: flex;
    flex-direction: column;
    align-items: center;
    justify-content: center;
    width: 69px;
    height: 426px;
    padding-bottom: 4px;
    box-sizing: border-box;
    border: 4px solid #fe0000;
    color: #fe0000;
    font-family: 'Noto Sans CJK JP', sans-serif;
    font-size: 40px;
    line-height: 58px;
    font-weight: 500;
    font-feature-settings: normal;
  }

  .pointer {
    position: absolute;
    left: 203px;
    top: 227px;
  }

  .watermark {
    position: absolute;
    left: 621px;
    bottom: 0;
    font-family: 'Open Sans', sans-serif;
    font-size: 17px;
    line-height: 23px;
    color: #e6eaee;
  }
</style>
